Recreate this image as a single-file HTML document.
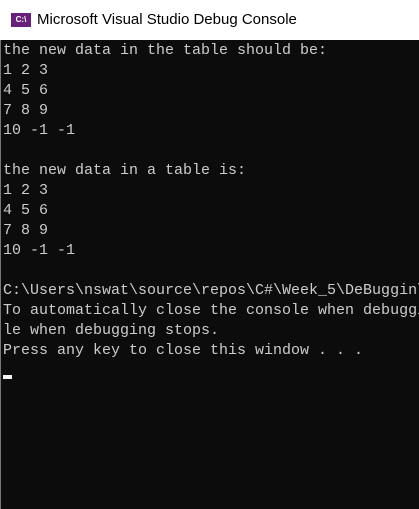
<!DOCTYPE html>
<html><head><meta charset="utf-8"><style>
html,body{margin:0;padding:0;width:419px;height:509px;overflow:hidden;background:#0c0c0c;}
#title{position:absolute;left:0;top:0;width:419px;height:40px;background:#fff;}
#icon{position:absolute;left:11px;top:13px;width:20px;height:14px;background:#68217a;color:#fff;font:bold 8px "Liberation Sans",sans-serif;line-height:14px;text-align:center;}
#tt{position:absolute;left:37px;top:11px;font:15px "Liberation Sans",sans-serif;color:#000;white-space:nowrap;}
#con{position:absolute;left:0;top:40px;width:418px;height:469px;background:#0c0c0c;border-left:1px solid #777;}
pre{margin:0;position:absolute;left:2px;top:1px;font:15px/20px "Liberation Mono",monospace;color:#cccccc;white-space:pre;}
#cur{position:absolute;left:2px;top:335px;width:9px;height:4px;background:#f2f2f2;}
</style></head><body>
<div id="title"><div id="icon">C:\</div><div id="tt">Microsoft Visual Studio Debug Console</div></div>
<div id="con"><pre>the new data in the table should be:
1 2 3
4 5 6
7 8 9
10 -1 -1

the new data in a table is:
1 2 3
4 5 6
7 8 9
10 -1 -1

C:\Users\nswat\source\repos\C#\Week_5\DeBuggin\
To automatically close the console when debuggi
le when debugging stops.
Press any key to close this window . . .</pre><div id="cur"></div></div>
</body></html>
